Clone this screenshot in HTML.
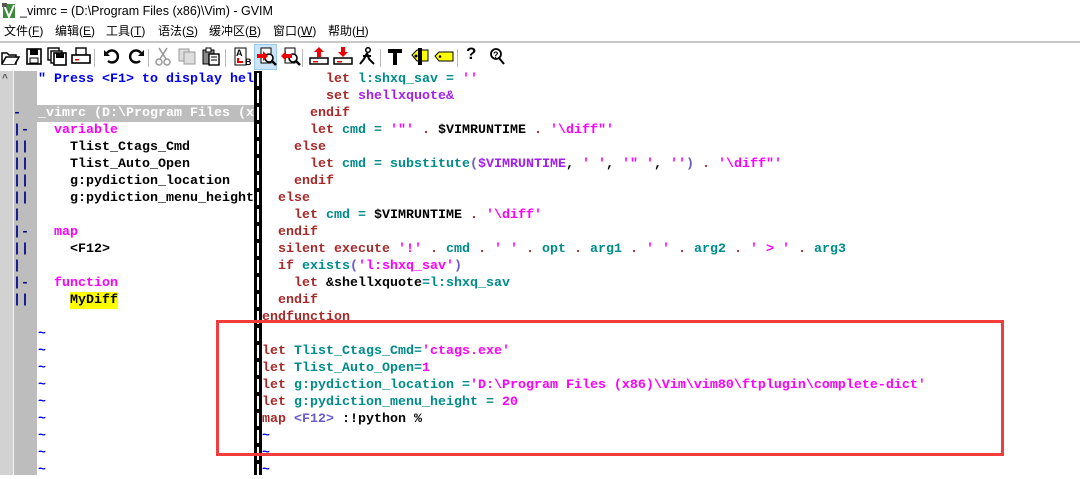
<!DOCTYPE html>
<html><head><meta charset="utf-8"><style>
*{margin:0;padding:0;box-sizing:border-box}
body{width:1080px;height:475px;overflow:hidden;background:#fff;position:relative;font-family:"Liberation Sans","Noto Sans CJK SC",sans-serif}
.title{position:absolute;left:0;top:0;height:22px;width:1080px;font-size:12.5px;line-height:22px;padding-left:20px;color:#000}
.menu{position:absolute;left:0;top:22px;height:19px;font-size:12px;line-height:19px;color:#000}
.menu span{position:absolute;white-space:nowrap}
.tb{position:absolute;left:0;top:41px;width:1080px;height:30px;border-top:2px solid #c8c8c8;background:#fff}
.ic{position:absolute;top:4px;width:20px;height:19px}
.sep{position:absolute;top:6px;width:1px;height:18px;background:#bbb}
pre{font-family:"Liberation Mono",monospace;font-weight:bold;font-size:13.33px;line-height:17px;position:absolute;white-space:pre;letter-spacing:0}
.k{color:#a52a2a}.t{color:#008b8b}.s{color:#f0f}.p{color:#6a5acd}.b{color:#0000f0}.m{color:#f0f}.v{color:#a020f0}
</style></head><body>
<div class="title"><svg style="position:absolute;left:2px;top:3px" width="15" height="16"><rect x="1" y="1" width="12" height="14" fill="#3a8a3a"/><path d="M2 2 L7 14 L12 2" stroke="#fff" stroke-width="2" fill="none"/><rect x="0" y="0" width="5" height="4" fill="#555"/></svg>_vimrc = (D:\Program Files (x86)\Vim) - GVIM</div>
<div class="menu"><span style="left:4px">文件(<u>F</u>)</span><span style="left:55px">编辑(<u>E</u>)</span><span style="left:106px">工具(<u>T</u>)</span><span style="left:158px">语法(<u>S</u>)</span><span style="left:209px">缓冲区(<u>B</u>)</span><span style="left:273px">窗口(<u>W</u>)</span><span style="left:328px">帮助(<u>H</u>)</span></div>
<div class="tb">
<svg class="ic" style="left:0" viewBox="0 0 20 19"><path d="M2 6h5l2 2h7v9H2z" fill="#fff" stroke="#000" stroke-width="1.5"/><path d="M2 17l4-7h13l-4 7" fill="#fff" stroke="#000" stroke-width="1.5"/></svg>
<svg class="ic" style="left:24px" viewBox="0 0 20 19"><rect x="3" y="2" width="14" height="15" fill="#fff" stroke="#000" stroke-width="1.6"/><rect x="6" y="2" width="8" height="6" fill="#000"/><rect x="6" y="11" width="8" height="5" fill="#fff" stroke="#000"/></svg>
<svg class="ic" style="left:47px" viewBox="0 0 20 19"><rect x="1" y="1" width="11" height="12" fill="#fff" stroke="#000" stroke-width="1.4"/><rect x="4" y="4" width="11" height="12" fill="#fff" stroke="#000" stroke-width="1.4"/><rect x="7" y="6" width="12" height="12" fill="#fff" stroke="#000" stroke-width="1.6"/><rect x="9" y="6" width="8" height="5" fill="#000"/></svg>
<svg class="ic" style="left:71px" viewBox="0 0 20 19"><rect x="5" y="1" width="10" height="7" fill="#fff" stroke="#000" stroke-width="1.4"/><rect x="1" y="8" width="18" height="8" fill="#fff" stroke="#000" stroke-width="1.6"/><rect x="4" y="12" width="4" height="1.5" fill="#e00"/></svg>
<div class="sep" style="left:94px"></div>
<svg class="ic" style="left:102px" viewBox="0 0 20 19"><path d="M5 6a6 6 0 1 1 1 8" fill="none" stroke="#000" stroke-width="2.4"/><path d="M2 3v6h6" fill="#000"/></svg>
<svg class="ic" style="left:126px" viewBox="0 0 20 19"><path d="M15 6a6 6 0 1 0-1 8" fill="none" stroke="#000" stroke-width="2.4"/><path d="M18 3v6h-6" fill="#000"/></svg>
<div class="sep" style="left:148px"></div>
<svg class="ic" style="left:153px" viewBox="0 0 20 19"><path d="M6 1l7 11M14 1L7 12" stroke="#999" stroke-width="1.6"/><circle cx="6" cy="15" r="3" fill="none" stroke="#999" stroke-width="1.5"/><circle cx="14" cy="15" r="3" fill="none" stroke="#999" stroke-width="1.5"/></svg>
<svg class="ic" style="left:177px" viewBox="0 0 20 19"><rect x="2" y="2" width="10" height="12" fill="#ddd" stroke="#999"/><rect x="7" y="5" width="11" height="12" fill="#ddd" stroke="#999"/></svg>
<svg class="ic" style="left:201px" viewBox="0 0 20 19"><rect x="2" y="3" width="11" height="14" fill="#888" stroke="#000"/><rect x="5" y="1" width="5" height="4" fill="#fff" stroke="#000"/><rect x="8" y="7" width="10" height="11" fill="#fff" stroke="#000" stroke-width="1.4"/><path d="M10 10h6M10 13h6" stroke="#000"/></svg>
<div class="sep" style="left:225px"></div>
<svg class="ic" style="left:234px" viewBox="0 0 20 19"><text x="2" y="9" font-size="9" font-weight="bold" font-family="Liberation Sans">A</text><text x="11" y="18" font-size="9" font-weight="bold" font-family="Liberation Sans">B</text><path d="M4 11v4h5" stroke="#e00" stroke-width="2" fill="none"/><rect x="1" y="1" width="11" height="17" fill="none" stroke="#000"/></svg>
<div style="position:absolute;left:254px;top:1px;width:23px;height:26px;background:#cce4f7;border:1px solid #99c9ef"></div>
<svg class="ic" style="left:257px" viewBox="0 0 20 19"><rect x="4" y="1" width="10" height="15" fill="#fff" stroke="#000"/><circle cx="12" cy="11" r="4" fill="#fff" stroke="#000" stroke-width="1.6"/><path d="M15 14l4 4" stroke="#000" stroke-width="2.5"/><path d="M0 7h6v-3l5 5-5 5v-3H0z" fill="#e00"/></svg>
<svg class="ic" style="left:281px" viewBox="0 0 20 19"><rect x="4" y="1" width="10" height="15" fill="#fff" stroke="#000"/><circle cx="12" cy="11" r="4" fill="#fff" stroke="#000" stroke-width="1.6"/><path d="M15 14l4 4" stroke="#000" stroke-width="2.5"/><path d="M11 7H5v-3l-5 5 5 5v-3h6z" fill="#e00"/></svg>
<div class="sep" style="left:302px"></div>
<svg class="ic" style="left:309px" viewBox="0 0 20 19"><rect x="1" y="11" width="18" height="6" fill="#fff" stroke="#000" stroke-width="1.5"/><rect x="4" y="14" width="5" height="1.5" fill="#e00"/><path d="M10 0l5 5h-3v5H8V5H5z" fill="#e00"/></svg>
<svg class="ic" style="left:333px" viewBox="0 0 20 19"><rect x="1" y="11" width="18" height="6" fill="#fff" stroke="#000" stroke-width="1.5"/><rect x="4" y="14" width="5" height="1.5" fill="#e00"/><path d="M10 10l5-5h-3V0H8v5H5z" fill="#e00"/></svg>
<svg class="ic" style="left:357px" viewBox="0 0 20 19"><circle cx="11" cy="3" r="2.3" fill="none" stroke="#000" stroke-width="1.5"/><path d="M10 6l-3 6 -4 5M10 6l2 6 5 5M6 9h8" stroke="#000" stroke-width="2" fill="none"/></svg>
<div class="sep" style="left:380px"></div>
<svg class="ic" style="left:385px" viewBox="0 0 20 19"><path d="M3 2h14v4H3z" fill="#000"/><rect x="8" y="5" width="4" height="13" fill="#000"/></svg>
<svg class="ic" style="left:410px" viewBox="0 0 20 19"><path d="M2 8l5-5h11v11H7z" fill="#ff0" stroke="#000"/><rect x="8" y="1" width="4" height="17" fill="#000"/><circle cx="6" cy="9" r="1.5" fill="#000"/></svg>
<svg class="ic" style="left:434px" viewBox="0 0 20 19"><path d="M1 9l4-4h14v9H5z" fill="#ff0" stroke="#000"/><circle cx="6" cy="9.5" r="1.3" fill="#000"/></svg>
<div class="sep" style="left:457px"></div>
<div style="position:absolute;left:466px;top:1px;font:bold 17px 'Liberation Sans';">?</div>
<svg class="ic" style="left:487px" viewBox="0 0 20 19"><circle cx="9" cy="7" r="5" fill="none" stroke="#000" stroke-width="1.8"/><path d="M12 11l5 6" stroke="#000" stroke-width="2"/><text x="6" y="11" font-size="9" font-weight="bold" font-family="Liberation Sans">?</text></svg>
</div>
<!-- gutter -->
<div style="position:absolute;left:0;top:71px;width:13px;height:404px;background:#d2d2d2"></div>
<div style="position:absolute;left:13px;top:71px;width:1px;height:404px;background:#f4f4f4"></div>
<div style="position:absolute;left:14px;top:71px;width:23px;height:404px;background:#bdbdbd"></div>
<div style="position:absolute;left:2px;top:73px;font:bold 10px 'Liberation Sans';color:#555">^</div>
<div style="position:absolute;left:37px;top:105px;width:217px;height:17px;background:#bdbdbd"></div>
<div style="position:absolute;left:70px;top:292px;width:48px;height:17px;background:#ff0"></div>
<pre style="left:13px;top:71px;color:#00008b">


-
|-
||
||
||
||
|
|-
||
|
|-
||</pre>
<pre style="left:38px;top:71px;color:#000"><span class="b">" Press &lt;F1&gt; to display hel</span>

<span style="color:#fff">_vimrc (D:\Program Files (x</span>
<span class="m">  variable</span>
    Tlist_Ctags_Cmd
    Tlist_Auto_Open
    g:pydiction_location
    g:pydiction_menu_height

<span class="m">  map</span>
    &lt;F12&gt;

<span class="m">  function</span>
    MyDiff

<span class="b">~
~
~
~
~
~
~
~
~</span></pre>
<!-- separator -->
<div style="position:absolute;left:254px;top:71px;width:8px;height:404px;background:#000"></div>
<div style="position:absolute;left:257px;top:71px;width:2px;height:404px;background:repeating-linear-gradient(#000 0 2px,#fff 2px 15px,#000 15px 17px)"></div>
<pre style="left:262px;top:71px;color:#000">        <span class="k">let</span> <span class="t">l:shxq_sav</span> <span class="t">=</span> <span class="s">''</span>
        <span class="k">set</span> <span class="v">shellxquote&amp;</span>
      <span class="k">endif</span>
      <span class="k">let</span> <span class="t">cmd</span> <span class="t">=</span> <span class="s">'"'</span> <span class="k">.</span> $VIMRUNTIME <span class="k">.</span> <span class="s">'\diff"'</span>
    <span class="k">else</span>
      <span class="k">let</span> <span class="t">cmd</span> <span class="t">=</span> <span class="t">substitute</span><span class="p">(</span><span class="v">$VIMRUNTIME</span>, <span class="s">' '</span>, <span class="s">'" '</span>, <span class="s">''</span><span class="p">)</span> <span class="k">.</span> <span class="s">'\diff"'</span>
    <span class="k">endif</span>
  <span class="k">else</span>
    <span class="k">let</span> <span class="t">cmd</span> <span class="t">=</span> $VIMRUNTIME <span class="k">.</span> <span class="s">'\diff'</span>
  <span class="k">endif</span>
  <span class="k">silent</span> <span class="k">execute</span> <span class="s">'!'</span> <span class="k">.</span> <span class="t">cmd</span> <span class="k">.</span> <span class="s">' '</span> <span class="k">.</span> <span class="t">opt</span> <span class="k">.</span> <span class="t">arg1</span> <span class="k">.</span> <span class="s">' '</span> <span class="k">.</span> <span class="t">arg2</span> <span class="k">.</span> <span class="s">' &gt; '</span> <span class="k">.</span> <span class="t">arg3</span>
  <span class="k">if</span> <span class="t">exists</span><span class="p">(</span><span class="s">'l:shxq_sav'</span><span class="p">)</span>
    <span class="k">let</span> &amp;shellxquote<span class="t">=l:shxq_sav</span>
  <span class="k">endif</span>
<span class="k">endfunction</span>

<span class="k">let</span> <span class="t">Tlist_Ctags_Cmd=</span><span class="s">'ctags.exe'</span>
<span class="k">let</span> <span class="t">Tlist_Auto_Open=</span><span class="s">1</span>
<span class="k">let</span> <span class="t">g:pydiction_location =</span><span class="s">'D:\Program Files (x86)\Vim\vim80\ftplugin\complete-dict'</span>
<span class="k">let</span> <span class="t">g:pydiction_menu_height</span> <span class="t">=</span> <span class="s">20</span>
<span class="k">map</span> <span class="p">&lt;F12&gt;</span> :!python %
<span class="b">~
~
~</span></pre>
<div style="position:absolute;left:216px;top:320px;width:788px;height:136px;border:3px solid #f33c3c"></div>
</body></html>
